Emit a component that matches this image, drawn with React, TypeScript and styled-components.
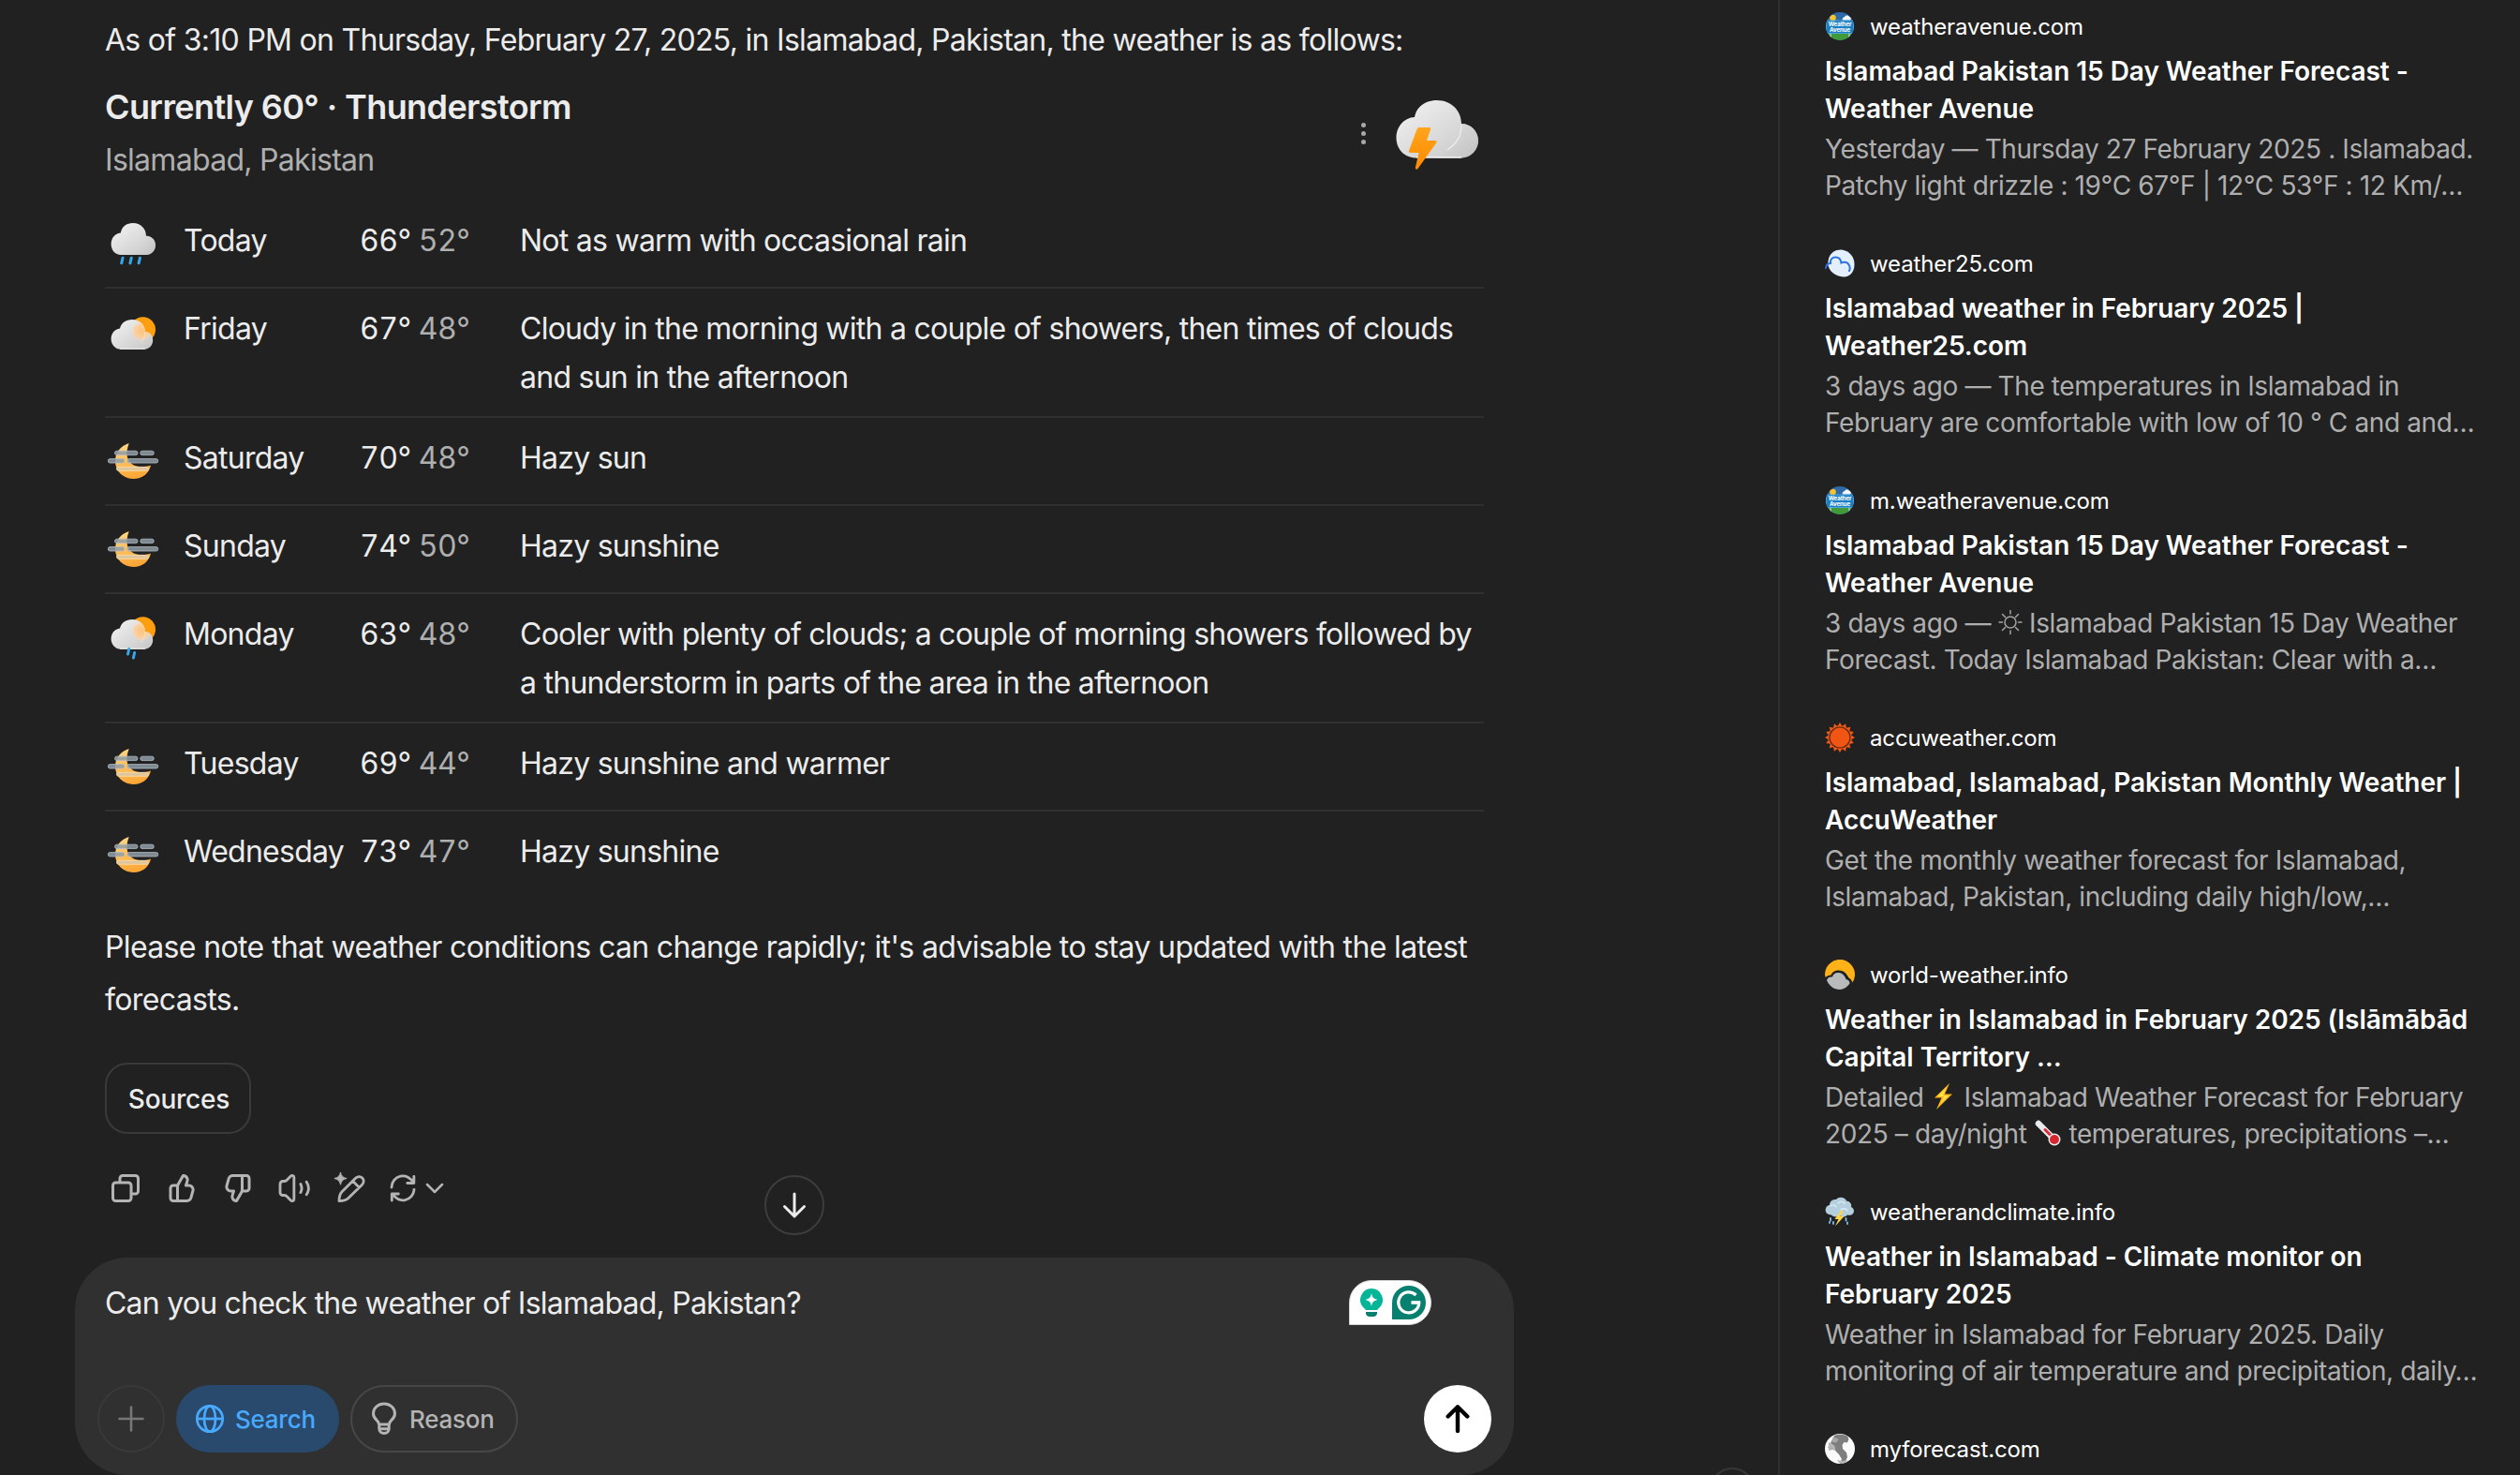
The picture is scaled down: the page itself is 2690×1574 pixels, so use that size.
import React from "react"
import styled, { createGlobalStyle } from "styled-components"

type Sky = "rain" | "sunCloud" | "haze" | "sunRain"

interface IDay {
    day: string
    high: number
    low: number
    text: string[]
    sky: Sky
}

interface ISource {
    icon: React.ReactNode
    domain: string
    title: string[]
    text: React.ReactNode[]
}

/* ---------- weather icons ---------- */

const Gradients = () => (
    <svg width="0" height="0" style={{ display: "block" }}>
        <defs>
            <linearGradient id="cloud" x1="0" y1="0" x2="1" y2="1">
                <stop offset="0" stopColor="#f4f4f4" />
                <stop offset="1" stopColor="#c6c6c6" />
            </linearGradient>
            <linearGradient id="moon" x1="0" y1="0" x2="0.3" y2="1">
                <stop offset="0" stopColor="#ffd98a" />
                <stop offset="1" stopColor="#ffa838" />
            </linearGradient>
            <linearGradient id="bolt" x1="0" y1="0" x2="0" y2="1">
                <stop offset="0" stopColor="#ffa51c" />
                <stop offset="1" stopColor="#ff8a00" />
            </linearGradient>
            <radialGradient id="glow" cx="0.5" cy="0.5" r="0.5">
                <stop offset="0" stopColor="#ffc27a" />
                <stop offset="0.7" stopColor="#ffcf9a" stopOpacity="0.85" />
                <stop offset="1" stopColor="#ffdcb8" stopOpacity="0" />
            </radialGradient>
            <linearGradient id="fold" x1="0" y1="0" x2="1" y2="1">
                <stop offset="0" stopColor="#e2e2e2" />
                <stop offset="1" stopColor="#bdbdbd" />
            </linearGradient>
        </defs>
    </svg>
)

const StormIcon = () => (
    <svg width="96" height="96" viewBox="0 0 96 96" fill="none">
        <path d="M24 74.500C11 74.500 2.500 65 2.500 53S11 31.500 22 31C24 20 33 13 46 13c15 0 26 11 26 25 10 0 18 8 18 18s-8 18.500-18 18.500z" fill="url(#cloud)" />
        <path d="M72 38c10 0 18 8 18 18s-8 18.500-18 18.500H46C60 68 72 55 72 38z" fill="url(#fold)" opacity="0.55" />
        <path d="M72 39c0 13-5 20-15 27" stroke="#f3f3f3" strokeWidth="1.500" opacity="0.7" />
        <path d="M24 74h48" stroke="#fff" strokeWidth="1.500" opacity="0.8" />
        <path d="M27 42h10.500c1.500 0 2 1 1.500 2.200L35 56h9c1.600 0 2 1.300 1.200 2.500L25.500 86c-1.200 1.500-3 .6-2.600-1.200L26.500 69h-8.800c-1.600 0-2.200-1-1.600-2.400l8.600-23c.4-1 1.200-1.600 2.300-1.600z" fill="url(#bolt)" />
    </svg>
)

const RainIcon = () => (
    <svg width="60" height="60" viewBox="0 0 60 60" fill="none">
        <path d="M17 42C11 42 6.600 37 6.600 30.500S11 19 16.800 18.500C18 12 23 8 30 8c8 0 14 6 14 13.700 6 0 10 4.500 10 10S49.500 42 44 42z" fill="url(#cloud)" />
        <path d="M44 21.700c6 0 10 4.500 10 10S49.500 42 44 42H34c6-4 10-11 10-20.300z" fill="url(#fold)" opacity="0.5" />
        <path d="M19 45.300l-1.300 5.500M28.200 45.300l-1.300 5.500M37.400 45.300l-1.300 5.500" stroke="#35a7ea" strokeWidth="3" strokeLinecap="round" />
    </svg>
)

interface ISunProps {
    rain?: boolean
}

const SunCloudIcon = ({ rain }: ISunProps) => (
    <svg width="60" height="60" viewBox="0 0 60 60" fill="none">
        <g transform={rain ? "translate(0 -6)" : undefined}>
            <circle cx="40.500" cy="27.700" r="13.500" fill="#ff9f0f" />
            <path d="M17 48.700c-6 0-10.400-5-10.400-11s4-10.500 9.400-11.200C17.500 20.500 22.500 17 29 17c8 0 14 5.700 14 13 5 0 8.200 4 8.200 9 0 5.500-4 9.700-9.200 9.700z" fill="url(#cloud)" />
            <path d="M28 27c0-5 5-9 9-8 4 2.500 6 6.500 6 11 3 0 6 2 7 5-4 5-12 6.500-17 3-3-2-5-6-5-11z" fill="url(#glow)" />
            <path d="M43 30c0 5-1.500 8.500-5 12" stroke="#ffe3c4" strokeWidth="1" opacity="0.8" />
            <path d="M16 48.200h27" stroke="#f5f5f5" strokeWidth="1" />
        </g>
        {rain && <path d="M25.700 42.500l-1.200 5.500M31.600 46.500l-1.200 5.500" stroke="#35a7ea" strokeWidth="3" strokeLinecap="round" />}
    </svg>
)

const HazeIcon = () => (
    <svg width="60" height="60" viewBox="0 0 60 60" fill="none">
        <path d="M25.700 11C22 21 23 28 28 32.500c5 4.300 13 5 21 2C47 43.500 39.500 49 30.500 49 19.500 49 11 40.500 11 30c0-9 6-16.500 14.700-19z" fill="url(#moon)" />
        <g fill="#8f9ba4" fillOpacity="0.85" stroke="#b3bdc4" strokeOpacity="0.8" strokeWidth="1">
            <rect x="10.500" y="19.200" width="24.500" height="4.400" rx="2.200" />
            <rect x="37.800" y="19.200" width="14.500" height="4.400" rx="2.200" />
            <rect x="3.300" y="27.600" width="17.600" height="4.400" rx="2.200" />
            <rect x="23.800" y="27.600" width="33" height="4.400" rx="2.200" />
        </g>
        <rect x="12.500" y="36.300" width="34" height="4" rx="2" fill="#e0c49a" stroke="#f8dfb4" strokeWidth="0.800" />
    </svg>
)

const skyIcons: Record<Sky, React.ReactNode> = {
    rain: <RainIcon />,
    sunCloud: <SunCloudIcon />,
    haze: <HazeIcon />,
    sunRain: <SunCloudIcon rain />,
}

/* ---------- action icons ---------- */

const thumbPath =
    "M11.8727 21.4961C11.6725 21.8466 11.2811 22.0423 10.8805 21.9922L10.4267 21.9355C7.95958 21.6271 6.36855 19.1665 7.09975 16.7901L7.65054 15H6.93226C4.29476 15 2.37923 12.4921 3.0732 9.94753L4.43684 4.94753C4.91145 3.20728 6.49209 2 8.29589 2H18.0045C19.6614 2 21.0045 3.34315 21.0045 5V12C21.0045 13.6569 19.6614 15 18.0045 15H15.6045L11.8727 21.4961ZM14.0045 4H8.29589C7.39399 4 6.60367 4.60364 6.36637 5.47376L5.00273 10.4738C4.65574 11.746 5.61351 13 6.93226 13H9.00451C9.32185 13 9.62036 13.1506 9.8089 13.4059C9.99743 13.6612 10.0536 13.9908 9.96028 14.2941L9.01131 17.3782C8.6661 18.5002 9.35608 19.6596 10.4726 19.9153L13.6401 14.3719C13.8711 13.9677 14.0045 13.5 14.0045 13.03V4ZM16.0045 13V4H18.0045C18.5568 4 19.0045 4.44772 19.0045 5V12C19.0045 12.5523 18.5568 13 18.0045 13H16.0045Z"

const CopyIcon = () => (
    <svg width="36" height="36" viewBox="0 0 24 24" fill="none" stroke="currentColor" strokeWidth="2" strokeLinejoin="round">
        <rect x="3" y="8" width="13" height="13" rx="2" />
        <path d="M8 8V5a2 2 0 0 1 2-2h9a2 2 0 0 1 2 2v9a2 2 0 0 1-2 2h-3" />
    </svg>
)

const ThumbUpIcon = () => (
    <svg width="36" height="36" viewBox="0 0 24 24" fill="currentColor">
        <path fillRule="evenodd" d={thumbPath} transform="rotate(180 12 12)" />
    </svg>
)

const ThumbDownIcon = () => (
    <svg width="36" height="36" viewBox="0 0 24 24" fill="currentColor">
        <path fillRule="evenodd" d={thumbPath} />
    </svg>
)

const SpeakerIcon = () => (
    <svg width="36" height="36" viewBox="0 0 24 24" fill="none" stroke="currentColor" strokeWidth="1.900" strokeLinecap="round" strokeLinejoin="round">
        <path d="M2 9a2 2 0 0 1 2-2h1c.8 0 1.500-.4 2-1l2.600-2.700c.9-.8 2.300-.3 2.300 1v15.400c0 1.300-1.400 1.800-2.300 1L7 18c-.5-.6-1.200-1-2-1H4a2 2 0 0 1-2-2z" />
        <path d="M16.600 9c1 1.900 1 4.100 0 6M20.800 7.500c1.900 2.900 1.900 6.100 0 9" />
    </svg>
)

const EditIcon = () => (
    <svg width="36" height="36" viewBox="0 0 24 24" fill="none" stroke="currentColor" strokeWidth="1.900" strokeLinejoin="round">
        <path d="M15.500 5c1.500-1.500 3.600-1.600 5-.3 1.300 1.400 1.200 3.400-.3 4.900L10.600 19c-1.300 1.300-4 2-6.600 2 0-2.600.8-5.200 2-6.500zM13.700 6.900l4.600 4.600" />
        <path d="M5 .6c.5 2.600 1.700 3.800 4.400 4.400C6.700 5.700 5.500 6.900 5 9.500 4.500 6.900 3.300 5.700.6 5 3.300 4.400 4.500 3.200 5 .6z" fill="currentColor" stroke="currentColor" strokeWidth="0.600" />
    </svg>
)

const RefreshIcon = () => (
    <svg width="36" height="36" viewBox="0 0 24 24" fill="none" stroke="currentColor" strokeWidth="1.900" strokeLinecap="round" strokeLinejoin="round">
        <path d="M4 11.300a8 8 0 0 1 15.300-3.300M19.900 3.600v4.700h-4.700M20 12.900A8 8 0 0 1 4.800 16M4.200 20.700V16h4.700" />
    </svg>
)

const ChevronIcon = () => (
    <svg width="20" height="12" viewBox="0 0 20 12" fill="none" stroke="currentColor" strokeWidth="2.500" strokeLinecap="round" strokeLinejoin="round">
        <path d="M2 2l8 8 8-8" />
    </svg>
)

const DownIcon = () => (
    <svg width="32" height="32" viewBox="0 0 32 32" fill="none" stroke="#ececec" strokeWidth="3" strokeLinecap="round" strokeLinejoin="round">
        <path d="M16 4v24M5.500 17.500L16 28l10.500-10.500" />
    </svg>
)

const UpIcon = () => (
    <svg width="32" height="32" viewBox="0 0 32 32" fill="none" stroke="#000" strokeWidth="4.400" strokeLinecap="round" strokeLinejoin="round">
        <path d="M16 29V3.500M5.700 13.500L16 3.300l10.300 10.200" />
    </svg>
)

const PlusIcon = () => (
    <svg width="28" height="28" viewBox="0 0 28 28" fill="none" stroke="currentColor" strokeWidth="2.600" strokeLinecap="round">
        <path d="M14 1.500v25M1.500 14h25" />
    </svg>
)

const GlobeIcon = () => (
    <svg width="32" height="32" viewBox="0 0 32 32" fill="none" stroke="currentColor" strokeWidth="2.700">
        <circle cx="16" cy="16" r="13.700" />
        <ellipse cx="16" cy="16" rx="6" ry="13.700" />
        <path d="M2.500 16h27" />
    </svg>
)

const BulbIcon = () => (
    <svg width="28" height="36" viewBox="0 0 28 36" fill="none" stroke="currentColor" strokeWidth="3" strokeLinejoin="round">
        <path d="M8.500 24c0-2-1-3.200-2.700-4.800C3.500 17 2.500 15 2.500 12.500 2.500 6.500 7.500 2 14 2s11.500 4.500 11.500 10.500c0 2.500-1 4.500-3.300 6.700-1.700 1.600-2.700 2.800-2.700 4.800zM8.800 24v4.500c0 3 2.200 5 5.200 5s5.200-2 5.200-5V24M9 28.700h10" />
    </svg>
)

const HintBulb = () => (
    <svg width="24" height="30" viewBox="0 0 24 30">
        <path d="M12 0a12 12 0 0 1 7.800 21L18 23H6l-1.800-2A12 12 0 0 1 12 0z" fill="#05b597" />
        <path d="M6 25h12v1.200c0 2.200-1.800 3.800-4 3.800h-4c-2.200 0-4-1.600-4-3.800z" fill="#067f6f" />
        <path d="M12 5c.8 4.500 2.300 6 6.500 7-4.200 1-5.700 2.500-6.500 7-.8-4.500-2.300-6-6.500-7 4.200-1 5.700-2.500 6.500-7z" fill="#fff" />
    </svg>
)

const GrammarMark = () => (
    <svg width="36" height="36" viewBox="0 0 36 36" fill="none">
        <path d="M18 0a18 18 0 1 1 0 36H0V18A18 18 0 0 1 18 0z" fill="#08806f" />
        <path d="M25.500 10A11 11 0 1 0 28.800 18h-8" stroke="#fff" strokeWidth="3.200" />
        <path d="M20.500 18H30" stroke="#fff" strokeWidth="3.200" />
    </svg>
)

/* ---------- site icons ---------- */

const AvenueIcon = () => (
    <svg width="32" height="32" viewBox="0 0 32 32">
        <clipPath id="avenueClip"><circle cx="16" cy="16" r="15" /></clipPath>
        <g clipPath="url(#avenueClip)">
            <rect width="32" height="32" fill="#2e6aa8" />
            <path d="M0 24h32v8H0z" fill="#3f9a37" />
            <path d="M5 22h2v7H5zM25 22h2v7h-2z" fill="#9cb8a8" />
            <circle cx="8.500" cy="7" r="3.300" fill="#f6c42c" />
            <path d="M19 9.500c-1-2 1-3.500 2-3.300C21.500 4 25.500 4 26 6c2 0 2.500 2.500 1 3.500z" fill="#f3f7fb" />
            <rect x="1.500" y="10" width="29" height="13.500" rx="1.500" fill="#1b7fc4" stroke="#5cb0e6" strokeWidth="0.800" />
        </g>
        <text x="16" y="16" textAnchor="middle" fontFamily="Inter, sans-serif" fontSize="6.200" fontWeight="700" fill="#fff">Weather</text>
        <text x="16" y="22" textAnchor="middle" fontFamily="Inter, sans-serif" fontSize="6.200" fontWeight="700" fill="#fff">Avenue</text>
    </svg>
)

const Weather25Icon = () => (
    <svg width="32" height="32" viewBox="0 0 32 32" fill="none">
        <path d="M4 11C6 4 12 1 18 1.500 26 2.500 31.500 9 31.500 17S27 30.500 20 30.500C11 30 5 25 3 17z" fill="#e3effc" />
        <path d="M1 21c.5-4 2.500-5 5-5C5.500 11.500 8 9.500 11.500 9.500S17 12 17.500 15.500c2.500-1.500 6-.8 7.500 1.200 2 2.500 2.300 4.800 1 7.300" stroke="#2b72e0" strokeWidth="2" strokeLinecap="round" />
    </svg>
)

const AccuIcon = () => (
    <svg width="32" height="32" viewBox="0 0 32 32" fill="none">
        {Array.from({ length: 16 }, (_, i) => (
            <path key={i} d="M16 0l3 5h-6z" fill="#f05a14" transform={`rotate(${i * 22.5} 16 16)`} />
        ))}
        <circle cx="16" cy="16" r="12.500" fill="#f05514" />
        <circle cx="16" cy="16" r="11" stroke="#5a2a17" strokeWidth="1.200" />
    </svg>
)

const WorldIcon = () => (
    <svg width="32" height="32" viewBox="0 0 32 32" fill="none">
        <path d="M0 16A16 16 0 1 1 29.500 24.500C28 21 27 20 25.500 19.500 23 14 19 11 14 11.500 10 11.500 7.500 14 6.500 16.500 4 16.500 2 17.500.6 19z" fill="#ffb218" />
        <path d="M2 22c1-3 3.500-4 6-3.500C9 15 11.500 13.500 15 14c4 .5 6.500 3.500 7.500 7 3 .5 4 2.500 4 4.500C23.500 29.500 20 32 16 32 9.500 32 4.500 28 2 22z" fill="#b9babc" />
    </svg>
)

const ClimateIcon = () => (
    <svg width="32" height="32" viewBox="0 0 32 32" fill="none">
        <path d="M7 19.500C2.500 19.500 0 16.500.8 13 1.500 10 3.500 9 5 9 5 4.500 9 2.500 12 3c3-3.500 9.500-2.500 11 1.500 4 .5 6 3.500 5 6.500 3.500 1.500 4 6 1 8-1.500 1-4 1-5 .5-2 2.500-6 2.500-8 .5-3 2-7 2-9-.5z" fill="#b4cfdd" />
        <path d="M6 10c2-2 5-1 6 1M14 7c2-2.500 6-2 7 .5M17 14c2-2 6-1.500 7 1" stroke="#dcebf3" strokeWidth="1.400" strokeLinecap="round" />
        <path d="M17 15l-6.500 9h4L11 31.500 20.500 21h-4.200L20 15z" fill="#fbd54a" />
        <path d="M6 23v2.500M9 27v2M22.500 23v2.500M24 27.500v1.500M5 27v1" stroke="#7fc1ea" strokeWidth="1.800" strokeLinecap="round" />
    </svg>
)

const MyForecastIcon = () => (
    <svg width="32" height="32" viewBox="0 0 32 32" fill="none">
        <circle cx="16" cy="16" r="16" fill="#fafafa" />
        <path d="M10 2c4-2 10-1.500 14 .5l1.500 3-1.500 4-3.500-.5-2 3 .5 4 4 4 1 5-3 6-5 1 2-5-3-5-4-4-1-5-4-3z" fill="#7e7e7e" />
        <path d="M4 9l5 3 3 6-4-1-4 1zM13 28l6 1 6-1-4 3h-6z" fill="#b5b5b5" />
        <path d="M9 4l5 2-2 3-4-1zM3 14l4 2 4 1" fill="#a5a5a5" stroke="#b0b0b0" strokeWidth="1" />
    </svg>
)

/* ---------- symbols inside the snippets ---------- */

const SunSign = () => (
    <InlineIcon width="26" height="28" viewBox="0 0 26 28" fill="none" stroke="#a3a3a3" strokeWidth="1.500" strokeLinecap="round">
        <circle cx="13" cy="14" r="6" />
        <path d="M13 1.500V5M13 23v3.500M1 14h3.500M21.500 14H25M4.500 5.500L7.500 8.500M21.500 5.500l-3 3M4.500 22.500l3-3M21.500 22.500l-3-3" />
    </InlineIcon>
)

const BoltSign = () => (
    <InlineIcon width="28" height="28" viewBox="0 0 28 28">
        <path d="M20 0L4 15.500h7.500L6 28 23 11.500h-8z" fill="#fdb515" />
        <path d="M17 4L7.500 14H14l-3.500 8L19 13h-6z" fill="#ffe14d" />
    </InlineIcon>
)

const ThermometerSign = () => (
    <InlineIcon width="30" height="28" viewBox="0 0 30 28" fill="none">
        <path d="M5 4l14 14" stroke="#e9ecef" strokeWidth="6.500" strokeLinecap="round" />
        <path d="M12 10.500l9 9" stroke="#d92d35" strokeWidth="3" strokeLinecap="round" />
        <circle cx="22" cy="21" r="6.500" fill="#eceff1" />
        <circle cx="22" cy="21" r="5" fill="#d7262f" />
    </InlineIcon>
)

/* ---------- data ---------- */

const days: IDay[] = [
    { day: "Today", high: 66, low: 52, sky: "rain", text: ["Not as warm with occasional rain"] },
    { day: "Friday", high: 67, low: 48, sky: "sunCloud", text: ["Cloudy in the morning with a couple of showers, then times of clouds", "and sun in the afternoon"] },
    { day: "Saturday", high: 70, low: 48, sky: "haze", text: ["Hazy sun"] },
    { day: "Sunday", high: 74, low: 50, sky: "haze", text: ["Hazy sunshine"] },
    { day: "Monday", high: 63, low: 48, sky: "sunRain", text: ["Cooler with plenty of clouds; a couple of morning showers followed by", "a thunderstorm in parts of the area in the afternoon"] },
    { day: "Tuesday", high: 69, low: 44, sky: "haze", text: ["Hazy sunshine and warmer"] },
    { day: "Wednesday", high: 73, low: 47, sky: "haze", text: ["Hazy sunshine"] },
]

const sources: ISource[] = [
    {
        icon: <AvenueIcon />,
        domain: "weatheravenue.com",
        title: ["Islamabad Pakistan 15 Day Weather Forecast -", "Weather Avenue"],
        text: ["Yesterday — Thursday 27 February 2025 . Islamabad.", "Patchy light drizzle : 19°C 67°F | 12°C 53°F : 12 Km/…"],
    },
    {
        icon: <Weather25Icon />,
        domain: "weather25.com",
        title: ["Islamabad weather in February 2025 |", "Weather25.com"],
        text: ["3 days ago — The temperatures in Islamabad in", "February are comfortable with low of 10 ° C and and…"],
    },
    {
        icon: <AvenueIcon />,
        domain: "m.weatheravenue.com",
        title: ["Islamabad Pakistan 15 Day Weather Forecast -", "Weather Avenue"],
        text: [<>3 days ago — <SunSign /> Islamabad Pakistan 15 Day Weather</>, "Forecast. Today Islamabad Pakistan: Clear with a…"],
    },
    {
        icon: <AccuIcon />,
        domain: "accuweather.com",
        title: ["Islamabad, Islamabad, Pakistan Monthly Weather |", "AccuWeather"],
        text: ["Get the monthly weather forecast for Islamabad,", "Islamabad, Pakistan, including daily high/low,…"],
    },
    {
        icon: <WorldIcon />,
        domain: "world-weather.info",
        title: ["Weather in Islamabad in February 2025 (Islāmābād", "Capital Territory …"],
        text: [<>Detailed <BoltSign /> Islamabad Weather Forecast for February</>, <>2025 – day/night <ThermometerSign /> temperatures, precipitations –…</>],
    },
    {
        icon: <ClimateIcon />,
        domain: "weatherandclimate.info",
        title: ["Weather in Islamabad - Climate monitor on", "February 2025"],
        text: ["Weather in Islamabad for February 2025. Daily", "monitoring of air temperature and precipitation, daily…"],
    },
    { icon: <MyForecastIcon />, domain: "myforecast.com", title: [], text: [] },
]

/* ---------- components ---------- */

const Forecast = () => (
    <section>
        <CardHeader>
            <div>
                <Current>Currently 60° · Thunderstorm</Current>
                <Place>Islamabad, Pakistan</Place>
            </div>
            <HeaderSide>
                <Dots><i /><i /><i /></Dots>
                <StormIcon />
            </HeaderSide>
        </CardHeader>
        {days.map((d) => (
            <DayRow key={d.day}>
                <SkyCell>{skyIcons[d.sky]}</SkyCell>
                <DayName>{d.day}</DayName>
                <Temps>{d.high}° <span>{d.low}°</span></Temps>
                <div>{d.text.map((line) => <Line key={line}>{line}</Line>)}</div>
            </DayRow>
        ))}
    </section>
)

const SourceItem = ({ icon, domain, title, text }: ISource) => (
    <Source>
        <Site>{icon}<span>{domain}</span></Site>
        <SourceTitle>{title.map((line) => <Line key={line}>{line}</Line>)}</SourceTitle>
        <Snippet>{text.map((line, i) => <Line key={i}>{line}</Line>)}</Snippet>
    </Source>
)

const App = () => {
    return (
        <>
            <GlobalStyle />
            <Gradients />
            <Page>
                <Chat>
                    <Message>
                        <Paragraph>As of 3:10 PM on Thursday, February 27, 2025, in Islamabad, Pakistan, the weather is as follows:</Paragraph>
                        <Forecast />
                        <Note>
                            <Line>Please note that weather conditions can change rapidly; it's advisable to stay updated with the latest</Line>
                            <Line>forecasts.</Line>
                        </Note>
                        <SourcesButton>Sources</SourcesButton>
                        <Actions>
                            <Action><CopyIcon /></Action>
                            <Action><ThumbUpIcon /></Action>
                            <Action><ThumbDownIcon /></Action>
                            <Action><SpeakerIcon /></Action>
                            <Action><EditIcon /></Action>
                            <Regenerate><RefreshIcon /><ChevronIcon /></Regenerate>
                        </Actions>
                    </Message>
                    <Composer>
                        <Prompt>Can you check the weather of Islamabad, Pakistan?</Prompt>
                        <Toolbar>
                            <RoundButton><PlusIcon /></RoundButton>
                            <Pill $active><GlobeIcon />Search</Pill>
                            <Pill><BulbIcon />Reason</Pill>
                            <SendButton><UpIcon /></SendButton>
                        </Toolbar>
                        <Grammar><HintBulb /><GrammarMark /></Grammar>
                    </Composer>
                    <ScrollDown><DownIcon /></ScrollDown>
                    <HelpButton />
                </Chat>
                <Sidebar>
                    {sources.map((s) => <SourceItem key={s.domain} {...s} />)}
                </Sidebar>
            </Page>
        </>
    )
}

export default App

/* ---------- styles ---------- */

const GlobalStyle = createGlobalStyle`
    *{
        box-sizing: border-box;
    }
    body{
        margin: 0;
        background: #212121;
        overflow: hidden;
    }
    h2, h3, p{
        margin: 0;
    }
    button{
        font: inherit;
        padding: 0;
        background: none;
        border: none;
    }
    svg{
        flex-shrink: 0;
    }
`;

const Page = styled.div`
    display: flex;
    width: 2690px;
    height: 1574px;
    overflow: hidden;
    background: #212121;
    color: #ececec;
    font-family: Inter, "Liberation Sans", sans-serif;
    font-size: 32px;
    letter-spacing: -0.71px;
`;

const Chat = styled.main`
    position: relative;
    width: 1898px;
    flex-shrink: 0;
    padding-top: 15px;
`;

const Message = styled.article`
    width: 1472px;
    margin-left: 112px;
`;

const Line = styled.span`
    display: block;
    white-space: nowrap;
`;

const Paragraph = styled.p`
    line-height: 56px;
    white-space: nowrap;
`;

const CardHeader = styled.header`
    display: flex;
    align-items: center;
    justify-content: space-between;
    padding: 15px 0 14px;
`;

const Current = styled.h2`
    font-size: 36px;
    font-weight: 600;
    line-height: 56px;
    letter-spacing: -0.6px;
`;

const Place = styled.p`
    line-height: 58px;
    color: #afafaf;
`;

const HeaderSide = styled.div`
    display: flex;
    align-items: center;
    gap: 30px;
    margin-bottom: 2px;
`;

const Dots = styled.div`
    display: flex;
    flex-direction: column;
    gap: 4px;

    i{
        width: 5px;
        height: 5px;
        border-radius: 50%;
        background: #a8a8a8;
    }
`;

const DayRow = styled.div`
    display: grid;
    grid-template-columns: 84px 188px 171px 1fr;
    padding: 17px 0 15px;
    line-height: 52px;
    letter-spacing: -0.74px;
    border-bottom: 2px solid #303030;

    &:last-child{
        border-bottom: none;
    }
`;

const SkyCell = styled.div`
    height: 61px;
    margin-top: -1px;

    svg{
        display: block;
    }
`;

const DayName = styled.div`
    white-space: nowrap;
`;

const Temps = styled.div`
    white-space: nowrap;
    letter-spacing: -0.5px;
    font-variant-numeric: tabular-nums;

    span{
        color: #afafaf;
    }
`;

const Note = styled.p`
    margin-top: 25px;
    line-height: 56px;
    letter-spacing: -0.64px;
`;

const SourcesButton = styled.button`
    display: flex;
    align-items: center;
    justify-content: center;
    width: 156px;
    height: 76px;
    margin-top: 39px;
    padding: 1px 0 0 2px;
    border: 2px solid #3a3a3a;
    border-radius: 24px;
    color: #ececec;
    font-size: 28px;
    font-weight: 500;
    letter-spacing: -0.2px;
`;

const Actions = styled.div`
    display: flex;
    margin: 28px 0 0 -8px;
    color: #b4b4b4;
`;

const Action = styled.button`
    display: flex;
    align-items: center;
    justify-content: center;
    width: 60px;
    height: 60px;
    color: inherit;
`;

const Regenerate = styled(Action)`
    width: 82px;
    justify-content: flex-start;
    padding-left: 8px;
    gap: 6px;
`;

const Composer = styled.div`
    position: relative;
    display: flex;
    flex-direction: column;
    justify-content: space-between;
    width: 1536px;
    height: 232px;
    margin: 44px 0 0 80px;
    padding: 21px 24px 24px;
    border-radius: 56px;
    background: #303030;
`;

const Prompt = styled.p`
    padding-left: 8px;
    line-height: 56px;
    letter-spacing: -0.77px;
    white-space: nowrap;
`;

const Toolbar = styled.div`
    display: flex;
    gap: 12px;
`;

const RoundButton = styled.button`
    display: flex;
    align-items: center;
    justify-content: center;
    width: 72px;
    height: 72px;
    border-radius: 50%;
    border: 2px solid #393939;
    color: #777;
`;

const Pill = styled.button<{ $active?: boolean }>`
    display: flex;
    align-items: center;
    gap: ${props => props.$active ? "11px" : "13px"};
    width: ${props => props.$active ? "174px" : "179px"};
    height: 72px;
    padding-left: 20px;
    border-radius: 36px;
    border: ${props => props.$active ? "none" : "2px solid #474747"};
    background: ${props => props.$active ? "#2a4a6d" : "transparent"};
    color: ${props => props.$active ? "#48aaff" : "#b4b4b4"};
    font-size: 26px;
    font-weight: 500;
    letter-spacing: -0.25px;
`;

const SendButton = styled(RoundButton)`
    margin-left: auto;
    border: none;
    background: #fff;
`;

/* floats over the prompt field */
const Grammar = styled.div`
    position: absolute;
    top: 24px;
    right: 88px;
    display: flex;
    align-items: center;
    gap: 10px;
    width: 88px;
    height: 48px;
    padding-left: 11px;
    border-radius: 24px 24px 24px 0;
    border: 1px solid #d5d5d8;
    background: #fff;
`;

const ScrollDown = styled.button`
    position: absolute;
    left: 816px;
    top: 1254px;
    display: flex;
    align-items: center;
    justify-content: center;
    width: 64px;
    height: 64px;
    border-radius: 50%;
    border: 2px solid #3d3d3d;
    background: #212121;
`;

const HelpButton = styled.button`
    position: absolute;
    left: 1825px;
    top: 1566px;
    width: 48px;
    height: 48px;
    border-radius: 50%;
    border: 2px solid #383838;
`;

const Sidebar = styled.aside`
    flex: 1;
    padding: 12px 0 0 48px;
    border-left: 2px solid #303030;
    overflow: hidden;
`;

const Source = styled.div`
    height: 253px;
`;

const Site = styled.div`
    display: flex;
    align-items: center;
    gap: 16px;
    height: 32px;
    color: #fff;
    font-size: 24px;
    letter-spacing: -0.15px;
`;

const SourceTitle = styled.h3`
    margin-top: 12px;
    color: #fff;
    font-size: 28px;
    font-weight: 600;
    line-height: 40px;
    letter-spacing: -0.04px;
`;

const Snippet = styled.p`
    margin-top: 4px;
    color: #afafaf;
    font-size: 28px;
    line-height: 39px;
    letter-spacing: -0.38px;
`;

const InlineIcon = styled.svg`
    vertical-align: -3px;
`;
